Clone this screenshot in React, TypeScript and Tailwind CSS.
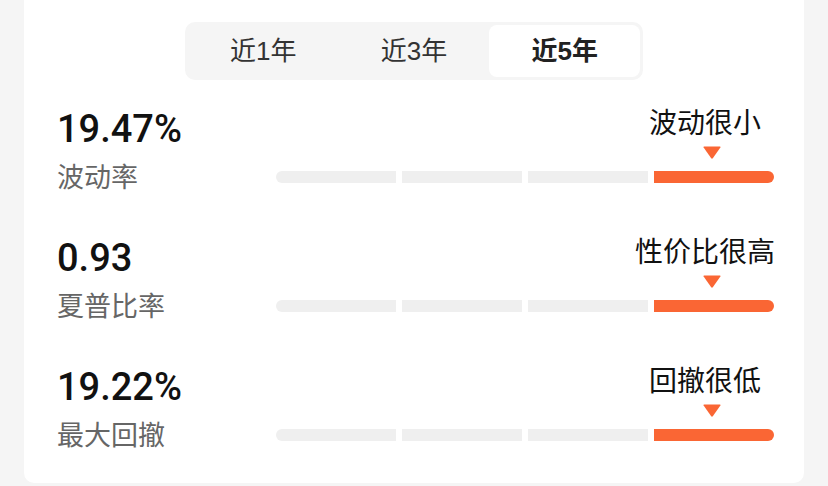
import React, { useState } from 'react';

type Period = '近1年' | '近3年' | '近5年';

interface Metric {
  value: string;
  label: string;
  verdict: string;
  level: number; // 0..3, which segment is lit
}

const METRICS: Metric[] = [
  { value: '19.47%', label: '波动率', verdict: '波动很小', level: 3 },
  { value: '0.93', label: '夏普比率', verdict: '性价比很高', level: 3 },
  { value: '19.22%', label: '最大回撤', verdict: '回撤很低', level: 3 },
];

const CJK = { fontFamily: '"Noto Sans CJK SC", "Liberation Sans", sans-serif' };

const Segments: React.FC<{ level: number }> = ({ level }) => (
  <div className="grid grid-cols-4 gap-[6px]">
    {[0, 1, 2, 3].map(i => (
      <div
        key={i}
        className={`h-[12px] ${i === 0 ? 'rounded-l-full' : ''} ${i === 3 ? 'rounded-r-full' : ''} ${
          i === level ? 'bg-[#fa6634]' : 'bg-[#efefef]'
        }`}
      />
    ))}
  </div>
);

const MetricRow: React.FC<{ metric: Metric }> = ({ metric }) => (
  <div className="flex h-[82px]">
    <div className="w-[219px] shrink-0 pt-[3px]">
      <p
        className="text-[38px] leading-[38px] font-medium text-[#111]"
        style={{ fontFamily: 'Roboto, "Liberation Sans", sans-serif' }}
      >
        {metric.value}
      </p>
      <p className="mt-[14px] text-[27px] leading-[27px] text-[#666]" style={CJK}>
        {metric.label}
      </p>
    </div>
    <div className="flex-1">
      <div className="grid grid-cols-4 gap-[6px]">
        <div className="col-start-4 flex flex-col items-center">
          <div className="flex w-full justify-center pr-[18px]">
            <span className="whitespace-nowrap text-[28px] leading-[28px] text-[#111]" style={CJK}>
              {metric.verdict}
            </span>
          </div>
          <div className="mt-[11px] flex w-full justify-center pr-[5px]">
            <svg width="18" height="13" viewBox="0 0 18 13">
              <path d="M1 0.5 H17 Q18 0.5 17.4 1.5 L9.8 12.3 Q9 13.2 8.2 12.3 L0.6 1.5 Q0 0.5 1 0.5 Z" fill="#fa6634" />
            </svg>
          </div>
        </div>
      </div>
      <div className="mt-[12px]">
        <Segments level={metric.level} />
      </div>
    </div>
  </div>
);

export default function App() {
  const [period, setPeriod] = useState<Period>('近5年');
  const periods: Period[] = ['近1年', '近3年', '近5年'];

  return (
    <div className="min-h-[486px] bg-[#f5f5f5] px-[24px]">
      <div className="rounded-b-[10px] bg-white pt-[22px] pb-[36px] pl-[33px] pr-[30px]">
        <div className="ml-[128px] flex h-[58px] w-[458px] rounded-[10px] bg-[#f5f5f5] p-[3px]">
          {periods.map(p => (
            <button
              key={p}
              onClick={() => setPeriod(p)}
              className={`flex-1 rounded-[8px] text-[26px] leading-none ${
                period === p ? 'bg-white font-bold text-[#222]' : 'text-[#333]'
              }`}
              style={{ fontFamily: '"Liberation Sans", "Noto Sans CJK SC", sans-serif' }}
            >
              {p}
            </button>
          ))}
        </div>
        <div className="mt-[27px] flex flex-col gap-[47px]">
          {METRICS.map(m => (
            <MetricRow key={m.label} metric={m} />
          ))}
        </div>
      </div>
    </div>
  );
}
